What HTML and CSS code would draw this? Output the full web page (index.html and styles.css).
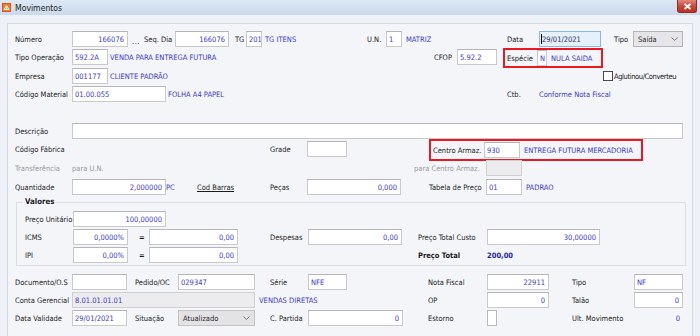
FILE: index.html
```html
<!DOCTYPE html>
<html>
<head>
<meta charset="utf-8">
<link rel="stylesheet" href="styles.css">
</head>
<body>
<div class="window">
  <div class="titlebar">
    <svg class="appicon" width="9" height="9" viewBox="0 0 9 9"><rect x="0" y="0" width="9" height="9" fill="#f07a2a"/><rect x="0.5" y="0.5" width="8" height="8" fill="none" stroke="#d65a10" stroke-width="1"/><path d="M2 6.5 L4.5 2.5 L7 6.5 Z" fill="none" stroke="#fff" stroke-width="1"/><circle cx="4.5" cy="5" r="0.8" fill="#fff"/></svg>
    <span class="title">Movimentos</span>
    <span class="close"><svg width="9" height="7" viewBox="0 0 9 7"><path d="M1.5 1 L7.5 6 M7.5 1 L1.5 6" stroke="#fff" stroke-width="1.8"/></svg></span>
  </div>
  <div class="panel">
    <div class="row">
      <span class="lbl w57">Número</span>
      <span class="in num w56">166076</span>
      <span class="lbl w16 pl4 dots">...</span>
      <span class="lbl w31">Seq. Dia</span>
      <span class="in num w54">166076</span>
      <span class="lbl w17 pl6">TG</span>
      <span class="in w16">201</span>
      <span class="val w105 pl3">TG ITENS</span>
      <span class="lbl w19">U.N.</span>
      <span class="in w16">1</span>
      <span class="val w105 pl4">MATRIZ</span>
      <span class="lbl w32">Data</span>
      <span class="in date w62"><span class="caret"></span>29/01/2021</span>
      <span class="lbl w32 pl13">Tipo</span>
      <span class="select w50">Saída<svg class="chev" width="7" height="4" viewBox="0 0 7 4"><path d="M0.5 0.5 L3.5 3.5 L6.5 0.5" fill="none" stroke="#777" stroke-width="1"/></svg></span>
    </div>
    <div class="row">
      <span class="lbl w57">Tipo Operação</span>
      <span class="in w36">592.2A</span>
      <span class="val w326 pl2">VENDA PARA ENTREGA FUTURA</span>
      <span class="lbl w23">CFOP</span>
      <span class="in w40">5.92.2</span>
      <span class="mark especie">
        <span class="lbl w32 pl2">Espécie</span>
        <span class="in w10">N</span>
        <span class="val pl4">NULA SAIDA</span>
      </span>
    </div>
    <div class="row mt1">
      <span class="lbl w57">Empresa</span>
      <span class="in w36">001177</span>
      <span class="val w495 pl2">CLIENTE PADRÃO</span>
      <span class="check"></span>
      <span class="lbl pl1 tight">Aglutinou/Converteu</span>
    </div>
    <div class="row">
      <span class="lbl w57">Código Material</span>
      <span class="in w94">01.00.055</span>
      <span class="val w341 pl2">FOLHA A4 PAPEL</span>
      <span class="lbl w32">Ctb.</span>
      <span class="val">Conforme Nota Fiscal</span>
    </div>
    <div class="row mt19">
      <span class="lbl w57">Descrição</span>
      <span class="in w611"></span>
    </div>
    <div class="row">
      <span class="lbl w255">Código Fábrica</span>
      <span class="lbl w37">Grade</span>
      <span class="in w40"></span>
      <span class="mark centro">
        <span class="lbl w53 pl2">Centro Armaz.</span>
        <span class="in w36">930</span>
        <span class="val pl4">ENTREGA FUTURA MERCADORIA</span>
      </span>
    </div>
    <div class="row mt1">
      <span class="lbl w57 dim">Transferência</span>
      <span class="lbl w342 dim">para U.N.</span>
      <span class="lbl w72 dim">para Centro Armaz.</span>
      <span class="in off w36"></span>
    </div>
    <div class="row mt1">
      <span class="lbl w57">Quantidade</span>
      <span class="in num w94">2,000000</span>
      <span class="val w31">PC</span>
      <span class="lbl w73 link">Cod Barras</span>
      <span class="lbl w37">Peças</span>
      <span class="in num w94">0,000</span>
      <span class="lbl w57 ml28">Tabela de Preço</span>
      <span class="in w36">01</span>
      <span class="val pl4">PADRAO</span>
    </div>
    <fieldset class="group">
      <legend>Valores</legend>
      <div class="row">
        <span class="lbl w48">Preço Unitário</span>
        <span class="in num w93">100,00000</span>
      </div>
      <div class="row">
        <span class="lbl w48">ICMS</span>
        <span class="in num w55">0,0000%</span>
        <span class="lbl w21 eq">=</span>
        <span class="in num w89">0,00</span>
        <span class="lbl w70 pl32">Despesas</span>
        <span class="in num w94">0,00</span>
        <span class="lbl w85 pl16">Preço Total Custo</span>
        <span class="in num w113">30,00000</span>
      </div>
      <div class="row">
        <span class="lbl w48">IPI</span>
        <span class="in num w55">0,00%</span>
        <span class="lbl w21 eq">=</span>
        <span class="in num w89">0,00</span>
        <span class="lbl w249 pl180 bold">Preço Total</span>
        <span class="val bold total">200,00</span>
      </div>
    </fieldset>
    <div class="row mt7">
      <span class="lbl w57">Documento/O.S</span>
      <span class="in w55"></span>
      <span class="lbl w51 pl8">Pedido/OC</span>
      <span class="in w77">029347</span>
      <span class="lbl w53 pl15">Série</span>
      <span class="in w39">NFE</span>
      <span class="lbl w140 pl81">Nota Fiscal</span>
      <span class="in num w62">22911</span>
      <span class="lbl w85 pl23">Tipo</span>
      <span class="in w49">NF</span>
    </div>
    <div class="row">
      <span class="lbl w57">Conta Gerencial</span>
      <span class="in off w183">8.01.01.01.01</span>
      <span class="val w173 pl4">VENDAS DIRETAS</span>
      <span class="lbl w59">OP</span>
      <span class="in num w62">0</span>
      <span class="lbl w85 pl23">Talão</span>
      <span class="in num w49">0</span>
    </div>
    <div class="row">
      <span class="lbl w57">Data Validade</span>
      <span class="in w55">29/01/2021</span>
      <span class="lbl w51 pl8">Situação</span>
      <span class="select off w77">Atualizado<svg class="chev" width="7" height="4" viewBox="0 0 7 4"><path d="M0.5 0.5 L3.5 3.5 L6.5 0.5" fill="none" stroke="#777" stroke-width="1"/></svg></span>
      <span class="lbl w53 pl15">C. Partida</span>
      <span class="in num w95">0</span>
      <span class="lbl w84 pl25">Estorno</span>
      <span class="in w10 tall"></span>
      <span class="lbl w75 pl75">Ult. Movimento</span>
      <span class="val num w111">0</span>
    </div>
  </div>
</div>
</body>
</html>
```
FILE: styles.css
```css
html, body {
  margin: 0;
  padding: 0;
}
body {
  width: 700px;
  height: 336px;
  overflow: hidden;
  background: #eef1f7;
  font-family: "DejaVu Sans Condensed", "DejaVu Sans", sans-serif;
  font-stretch: condensed;
  font-size: 7.5px;
  color: #1b1b1b;
}
.window {
  width: 700px;
  height: 336px;
  display: flex;
  flex-direction: column;
}
.titlebar {
  height: 15px;
  flex: none;
  display: flex;
  align-items: center;
  background: linear-gradient(#dde8f5, #cad9ec);
  position: relative;
}
.appicon {
  margin-left: 2px;
  flex: none;
}
.title {
  margin-left: 4px;
  font-size: 8.6px;
  color: #1e1e1e;
}
.close {
  margin-left: auto;
  margin-right: 3px;
  align-self: flex-start;
  width: 20px;
  height: 13px;
  box-sizing: border-box;
  border: 1px solid #8e2a22;
  border-top: none;
  border-radius: 0 0 3px 3px;
  background: linear-gradient(#e08a7c, #c9493a 50%, #b83223);
  display: flex;
  align-items: center;
  justify-content: center;
}
.panel {
  flex: 1;
  margin: 8px 7px 0 7px;
  border: 1px solid #d6d8df;
  border-bottom: none;
  background: #f4f5f9;
  padding: 6px 0 0 7px;
}
.row {
  display: flex;
  align-items: center;
  height: 18px;
  white-space: nowrap;
}
.mt1 { margin-top: 1px; }
.mt7 { margin-top: 7px; }
.mt19 { margin-top: 19px; }
.lbl, .val {
  flex: none;
  box-sizing: border-box;
}
.val { color: #3b3bc4; }
.dim { color: #9a9a9a; }
.bold { font-weight: bold; }
.val.total { color: #2424a8; }
.link { text-decoration: underline; }
.tight { letter-spacing: -0.4px; }
.eq { padding-left: 11px; font-weight: bold; }
.dots { letter-spacing: 0.5px; padding-top: 4px; }
.in {
  flex: none;
  box-sizing: border-box;
  height: 16px;
  border: 1px solid #c9c9cc;
  border-top-color: #b5b5b8;
  background: #fff;
  color: #3b3bc4;
  padding: 0 2px;
  display: flex;
  align-items: center;
  overflow: hidden;
}
.in.tall { height: 16px; border-color: #b9b9bc; }
.num { justify-content: flex-end; padding-right: 3px; display: flex; }
.in.off {
  background: #ececee;
  border-color: #d0d0d3;
}
.in.date {
  background: #e6f0fb;
  border-color: #89b7e6;
  color: #2e2e58;
  padding-left: 1px;
}
.caret {
  width: 1px;
  height: 10px;
  background: #000;
  margin-right: 0;
}
.select {
  flex: none;
  box-sizing: border-box;
  height: 16px;
  border: 1px solid #b4b4b7;
  background: #e6e6e8;
  color: #2a2a2a;
  padding: 0 4px;
  display: flex;
  align-items: center;
  justify-content: space-between;
}
.select.off { background: #e3e3e5; border-color: #c3c3c6; }
.check {
  flex: none;
  width: 10px;
  height: 10px;
  box-sizing: border-box;
  border: 1px solid #4a4a4a;
  background: #fff;
}
.mark {
  flex: none;
  display: flex;
  align-items: center;
  box-sizing: border-box;
  border: 2px solid #ea1822;
}
.especie {
  margin-left: 6px;
  width: 100px;
  height: 20px;
  margin-top: 2px;
}
.centro {
  margin-left: 82px;
  width: 214px;
  height: 22px;
  margin-top: 2px;
}
.group {
  margin: 1px 0 0 1px;
  width: 670px;
  box-sizing: border-box;
  border: 1px solid #dcdde3;
  padding: 3px 0 1px 8px;
  min-width: 0;
}
.group legend {
  font-weight: bold;
  padding: 0 2px;
  margin-left: -2px;
  font-size: 7.8px;
  line-height: 10px;
}
.pl1 { padding-left: 1px; }
.pl2 { padding-left: 2px; }
.pl3 { padding-left: 3px; }
.pl4 { padding-left: 4px; }
.pl6 { padding-left: 6px; }
.pl8 { padding-left: 8px; }
.pl13 { padding-left: 13px; }
.pl15 { padding-left: 15px; }
.pl16 { padding-left: 16px; }
.pl23 { padding-left: 23px; }
.pl25 { padding-left: 25px; }
.pl32 { padding-left: 32px; }
.pl75 { padding-left: 75px; }
.pl81 { padding-left: 81px; }
.pl180 { padding-left: 180px; }
.ml28 { margin-left: 28px; }
.w10 { width: 10px; }
.w16 { width: 16px; }
.w17 { width: 17px; }
.w19 { width: 19px; }
.w21 { width: 21px; }
.w23 { width: 23px; }
.w31 { width: 31px; }
.w32 { width: 32px; }
.w36 { width: 36px; }
.w37 { width: 37px; }
.w39 { width: 39px; }
.w40 { width: 40px; }
.w48 { width: 48px; }
.w49 { width: 49px; }
.w50 { width: 50px; }
.w51 { width: 51px; }
.w53 { width: 53px; }
.w54 { width: 54px; }
.w55 { width: 55px; }
.w56 { width: 56px; }
.w57 { width: 57px; }
.w59 { width: 59px; }
.w62 { width: 62px; }
.w70 { width: 70px; }
.w72 { width: 72px; }
.w73 { width: 73px; }
.w75 { width: 75px; }
.w77 { width: 77px; }
.w84 { width: 84px; }
.w85 { width: 85px; }
.w89 { width: 89px; }
.w93 { width: 93px; }
.w94 { width: 94px; }
.w95 { width: 95px; }
.w105 { width: 105px; }
.w111 { width: 111px; }
.w113 { width: 113px; }
.w140 { width: 140px; }
.w173 { width: 173px; }
.w183 { width: 183px; }
.w249 { width: 249px; }
.w255 { width: 255px; }
.w326 { width: 326px; }
.w341 { width: 341px; }
.w342 { width: 342px; }
.w495 { width: 495px; }
.w611 { width: 611px; }
```
